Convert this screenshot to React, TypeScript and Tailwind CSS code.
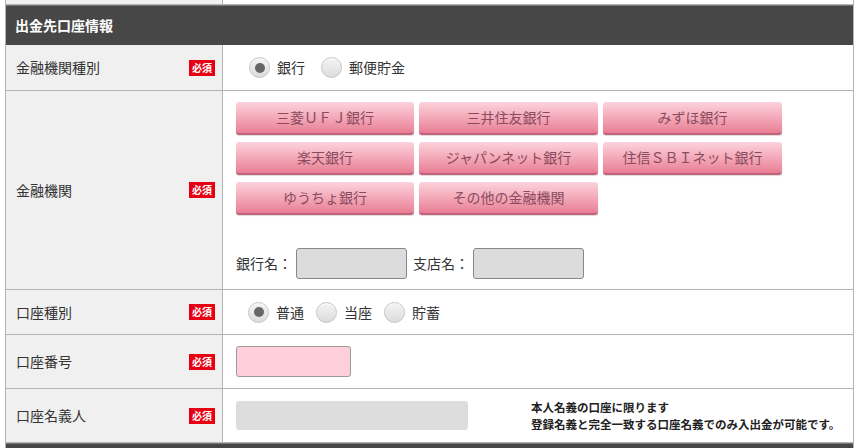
import type { ReactNode } from 'react';

const banks = [
  '三菱ＵＦＪ銀行',
  '三井住友銀行',
  'みずほ銀行',
  '楽天銀行',
  'ジャパンネット銀行',
  '住信ＳＢＩネット銀行',
  'ゆうちょ銀行',
  'その他の金融機関',
];

function Badge() {
  return (
    <span className="flex h-[16px] w-[26px] items-center justify-center bg-[#e60012] text-[10px] font-bold leading-none text-white">
      必須
    </span>
  );
}

function Radio({ label, checked }: { label: string; checked?: boolean }) {
  return (
    <label className="flex items-center gap-[7px]">
      <span className="flex h-[21px] w-[21px] items-center justify-center rounded-full border border-[#c4c4c4] bg-gradient-to-b from-[#f4f4f4] to-[#dcdcdc] shadow-[inset_0_1px_1px_rgba(255,255,255,0.8)]">
        {checked && <span className="h-[10px] w-[10px] rounded-full bg-[#666]" />}
      </span>
      <span className="text-[14px] text-[#333]">{label}</span>
    </label>
  );
}

function Row({ label, height, children }: { label: string; height: string; children: ReactNode }) {
  return (
    <div className={`grid grid-cols-[217px_1fr] border-b border-[#b4b4b4] ${height}`}>
      <div className="flex items-center justify-between border-r border-[#b4b4b4] bg-[#f0f0f0] pl-[10px] pr-[7px]">
        <span className="text-[14px] text-[#333]">{label}</span>
        <Badge />
      </div>
      <div className="flex items-center bg-white pl-[13px]">{children}</div>
    </div>
  );
}

export default function App() {
  return (
    <div
      className="h-[448px] w-[860px] overflow-hidden bg-white"
      style={{ fontFamily: '"Noto Sans CJK JP", "Noto Sans", sans-serif' }}
    >
      <div className="ml-[5px] w-[849px] border-x border-[#b4b4b4]">
        <div className="grid h-[5px] grid-cols-[217px_1fr] border-b border-[#b4b4b4]">
          <div className="border-r border-[#b4b4b4] bg-[#f0f0f0]" />
          <div className="bg-white" />
        </div>
        <div className="flex h-[40px] items-center border-t border-[#777] bg-[#474747] pl-[9px]">
          <h2 className="text-[14px] font-bold text-white">出金先口座情報</h2>
        </div>

        <Row label="金融機関種別" height="h-[46px]">
          <div className="flex items-center gap-[16px] pl-[13px]">
            <Radio label="銀行" checked />
            <Radio label="郵便貯金" />
          </div>
        </Row>

        <Row label="金融機関" height="h-[199px]">
          <div className="flex h-full flex-col pt-[11px]">
            <div className="grid grid-cols-[178px_179px_179px] gap-x-[5px] gap-y-[7px]">
              {banks.map((b) => (
                <button
                  key={b}
                  className="h-[33px] rounded-[3px] border-b-2 border-[#c2627a] bg-gradient-to-b from-[#fbd3dc] to-[#e87e96] text-[14px] text-[#8a4b5d] shadow-[0_1px_1px_rgba(0,0,0,0.15)]"
                >
                  {b}
                </button>
              ))}
            </div>
            <div className="mt-[33px] flex items-center text-[14px] text-[#333]">
              <span>銀行名：</span>
              <input className="ml-[4px] h-[31px] w-[111px] rounded-[3px] border border-[#888] bg-[#dcdcdc]" />
              <span className="ml-[6px]">支店名：</span>
              <input className="ml-[4px] h-[31px] w-[111px] rounded-[3px] border border-[#888] bg-[#dcdcdc]" />
            </div>
          </div>
        </Row>

        <Row label="口座種別" height="h-[45px]">
          <div className="flex items-center gap-[12px] pl-[12px]">
            <Radio label="普通" checked />
            <Radio label="当座" />
            <Radio label="貯蓄" />
          </div>
        </Row>

        <Row label="口座番号" height="h-[54px]">
          <input className="h-[31px] w-[115px] rounded-[3px] border border-[#999] bg-[#ffd0dc]" />
        </Row>

        <Row label="口座名義人" height="h-[54px]">
          <div className="flex items-center">
            <input className="h-[29px] w-[232px] rounded-[3px] bg-[#dddddd]" />
            <div className="ml-[63px] text-[11.5px] font-bold leading-[17px] text-[#222]">
              <p>本人名義の口座に限ります</p>
              <p>登録名義と完全一致する口座名義でのみ入出金が可能です。</p>
            </div>
          </div>
        </Row>
        <div className="h-[10px] border-t border-[#777] bg-[#474747]" />
      </div>
    </div>
  );
}
